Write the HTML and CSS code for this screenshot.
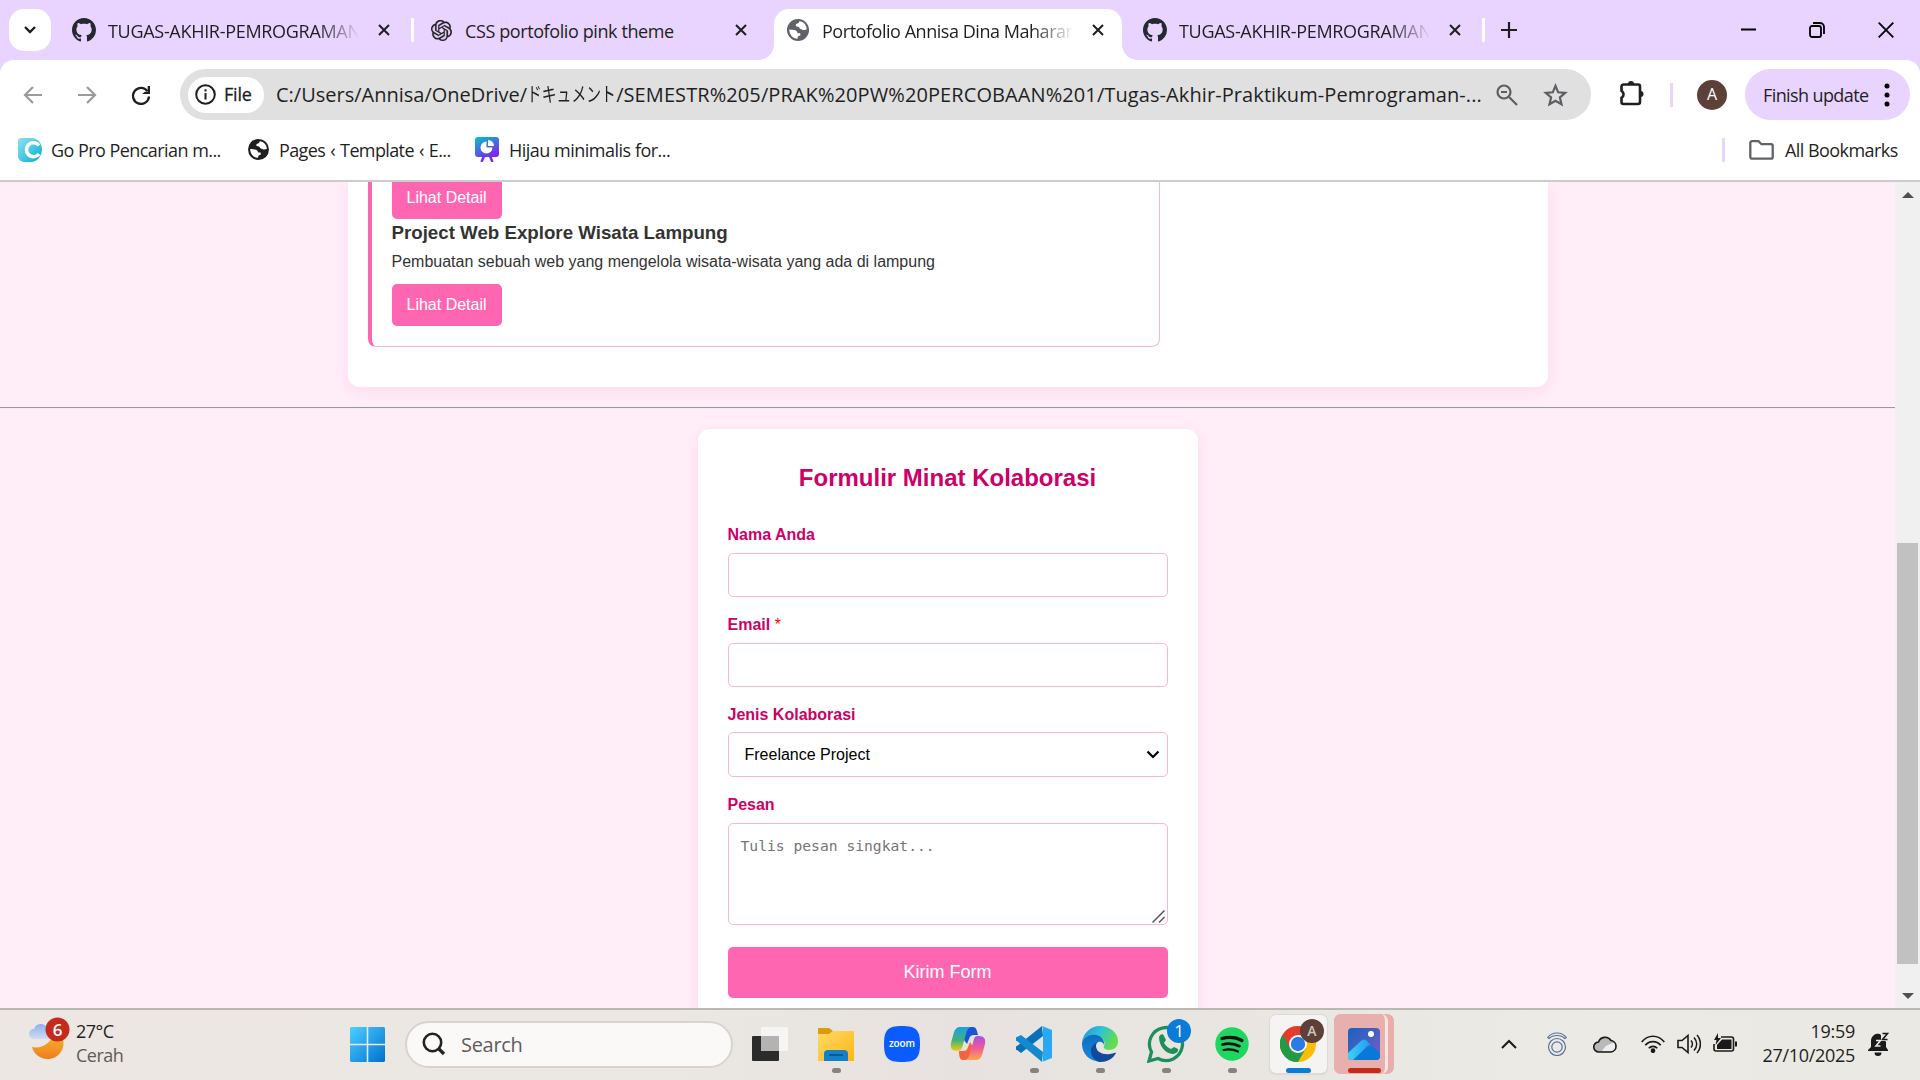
FILE: index.html
```html
<!DOCTYPE html>
<html lang="id">
<head>
<meta charset="utf-8">
<title>Portofolio Annisa Dina Maharani</title>
<link rel="stylesheet" href="styles.css">
</head>
<body>
<svg width="0" height="0" class="defs" aria-hidden="true">
  <defs>
    <symbol id="github" viewBox="0 0 16 16"><path fill="#24292f" d="M8 0C3.58 0 0 3.58 0 8c0 3.54 2.29 6.53 5.47 7.59.4.07.55-.17.55-.38 0-.19-.01-.82-.01-1.49-2.01.37-2.53-.49-2.69-.94-.09-.23-.48-.94-.82-1.13-.28-.15-.68-.52-.01-.53.63-.01 1.08.58 1.23.82.72 1.21 1.87.87 2.33.66.07-.52.28-.87.51-1.07-1.78-.2-3.64-.89-3.64-3.95 0-.87.31-1.59.82-2.15-.08-.2-.36-1.02.08-2.12 0 0 .67-.21 2.2.82.64-.18 1.32-.27 2-.27s1.36.09 2 .27c1.53-1.04 2.2-.82 2.2-.82.44 1.1.16 1.92.08 2.12.51.56.82 1.27.82 2.15 0 3.07-1.87 3.75-3.65 3.95.29.25.54.73.54 1.48 0 1.07-.01 1.93-.01 2.2 0 .21.15.46.55.38A8.01 8.01 0 0 0 16 8c0-4.42-3.58-8-8-8z"/></symbol>
    <symbol id="close" viewBox="0 0 12 12"><path d="M1 1l10 10M11 1L1 11" stroke="#1f1f1f" stroke-width="2" fill="none"/></symbol>
    <symbol id="globe" viewBox="0 0 24 24"><circle cx="12" cy="12" r="12" fill="currentColor"/><path fill="#fff" d="M2.500 11.500c0 0 3 .2 5 .5 2.500.3 4 1.500 4 3.500h3v2.500c-2 0-3 .8-3 3.500-5 0-9-4-9-10zM13.500 2.500c-.5 2-1.500 2.500-3 2.800-1 .2-1 1.500-.8 2.700 2.500 0 3.800 1 4.300 2.500 2 .3 2.500 1.500 4.500 1.500 1.500 0 2.300-.5 3-.5 0-5-3.500-8.500-8-9z"/></symbol>
  </defs>
</svg>

<header class="tabstrip">
  <button class="tab-search"><svg width="14" height="10" viewBox="0 0 14 10"><path d="M2 2l5 5 5-5" stroke="#1f1f1f" stroke-width="2.400" fill="none"/></svg></button>
  <div class="tab tab-1">
    <svg class="fav" width="24" height="24"><use href="#github"/></svg>
    <span class="title faded">TUGAS-AKHIR-PEMROGRAMAN</span>
    <svg class="x" width="12" height="12"><use href="#close"/></svg>
  </div>
  <i class="tab-div"></i>
  <div class="tab tab-2">
    <svg class="fav" width="21" height="21" viewBox="0 0 24 24"><path fill="#202020" stroke="#202020" stroke-width=".3" d="M22.2819 9.8211a5.9847 5.9847 0 0 0-.5157-4.9108 6.0462 6.0462 0 0 0-6.5098-2.9A6.0651 6.0651 0 0 0 4.9807 4.1818a5.9847 5.9847 0 0 0-3.9977 2.9 6.0462 6.0462 0 0 0 .7427 7.0966 5.98 5.98 0 0 0 .511 4.9107 6.051 6.051 0 0 0 6.5146 2.9001A5.9847 5.9847 0 0 0 13.2599 24a6.0557 6.0557 0 0 0 5.7718-4.2058 5.9894 5.9894 0 0 0 3.9977-2.9001 6.0557 6.0557 0 0 0-.7475-7.0729zm-9.022 12.6081a4.4755 4.4755 0 0 1-2.8764-1.0408l.1419-.0804 4.7783-2.7582a.7948.7948 0 0 0 .3927-.6813v-6.7369l2.02 1.1686a.071.071 0 0 1 .038.052v5.5826a4.504 4.504 0 0 1-4.4945 4.4944zm-9.6607-4.1254a4.4708 4.4708 0 0 1-.5346-3.0137l.142.0852 4.783 2.7582a.7712.7712 0 0 0 .7806 0l5.8428-3.3685v2.3324a.0804.0804 0 0 1-.0332.0615L9.74 19.9502a4.4992 4.4992 0 0 1-6.1408-1.6464zM2.3408 7.8956a4.485 4.485 0 0 1 2.3655-1.9728V11.6a.7664.7664 0 0 0 .3879.6765l5.8144 3.3543-2.0201 1.1685a.0757.0757 0 0 1-.071 0l-4.8303-2.7865A4.504 4.504 0 0 1 2.3408 7.872zm16.5963 3.8558L13.1038 8.364 15.1192 7.2a.0757.0757 0 0 1 .071 0l4.8303 2.7913a4.4944 4.4944 0 0 1-.6765 8.1042v-5.6772a.79.79 0 0 0-.407-.667zm2.0107-3.0231l-.142-.0852-4.7735-2.7818a.7759.7759 0 0 0-.7854 0L9.409 9.2297V6.8974a.0662.0662 0 0 1 .0284-.0615l4.8303-2.7866a4.4992 4.4992 0 0 1 6.6802 4.66zM8.3065 12.863l-2.02-1.1638a.0804.0804 0 0 1-.038-.0567V6.0742a4.4992 4.4992 0 0 1 7.3757-3.4537l-.142.0805L8.704 5.459a.7948.7948 0 0 0-.3927.6813zm1.0976-2.3654l2.602-1.4998 2.6069 1.4998v2.9994l-2.5974 1.4997-2.6067-1.4997Z"/></svg>
    <span class="title">CSS portofolio pink theme</span>
    <svg class="x" width="12" height="12"><use href="#close"/></svg>
  </div>
  <div class="tab tab-3 active">
    <svg class="fav grey" width="22" height="22"><use href="#globe"/></svg>
    <span class="title faded">Portofolio Annisa Dina Maharan</span>
    <svg class="x" width="12" height="12"><use href="#close"/></svg>
  </div>
  <div class="tab tab-4">
    <svg class="fav" width="24" height="24"><use href="#github"/></svg>
    <span class="title faded">TUGAS-AKHIR-PEMROGRAMAN</span>
    <svg class="x" width="12" height="12"><use href="#close"/></svg>
  </div>
  <i class="tab-div"></i>
  <svg class="plus" width="16" height="16" viewBox="0 0 16 16"><path d="M8 0v16M0 8h16" stroke="#1f1f1f" stroke-width="2.200"/></svg>
  <div class="win-controls">
    <svg width="16" height="16" viewBox="0 0 16 16"><path d="M1 7.500h15" stroke="#000" stroke-width="2"/></svg>
    <svg width="16" height="16" viewBox="0 0 16 16" fill="none" stroke="#000" stroke-width="1.800"><rect x="1" y="4" width="11" height="11" rx="2"/><path d="M4 1h7a4 4 0 0 1 4 4v7"/></svg>
    <svg width="16" height="16" viewBox="0 0 16 16"><path d="M.7.700l14.600 14.600M15.300.7L.7 15.300" stroke="#000" stroke-width="1.800"/></svg>
  </div>
</header>

<nav class="toolbar">
  <svg class="nav-ic" width="20" height="18" viewBox="0 0 20 18" fill="none" stroke="#9b9b9b" stroke-width="2.200"><path d="M19 9H2M10 1L2 9l8 8"/></svg>
  <svg class="nav-ic" width="20" height="18" viewBox="0 0 20 18" fill="none" stroke="#9b9b9b" stroke-width="2.200"><path d="M1 9h17M10 1l8 8-8 8"/></svg>
  <svg class="nav-ic" width="20" height="20" viewBox="0 0 20 20"><path d="M16.500 6.200A8 8 0 1 0 18 11.500" fill="none" stroke="#1f1f1f" stroke-width="2.300"/><path d="M19 1v8h-8l3-2.300h2.700V1z" fill="#1f1f1f"/></svg>
  <div class="omnibox">
    <span class="chip"><svg width="21" height="21" viewBox="0 0 21 21"><circle cx="10.500" cy="10.500" r="9.300" fill="none" stroke="#1f1f1f" stroke-width="2"/><path d="M10.500 9v6.500M10.500 5.300v2.200" stroke="#1f1f1f" stroke-width="2"/></svg><span class="file">File</span></span>
    <span class="url"><span>C:/Users/Annisa/OneDrive/</span><span class="jp">ドキュメント</span><span class="path">/SEMESTR%205/PRAK%20PW%20PERCOBAAN%201/Tugas-Akhir-Praktikum-Pemrograman-...</span></span>
    <svg class="mag" width="22" height="22" viewBox="0 0 22 22" fill="none" stroke="#5b5f63" stroke-width="2.200"><circle cx="8" cy="8" r="6.500"/><path d="M13 13l8 8M5 8h6"/></svg>
    <svg class="star" width="25" height="24" viewBox="0 0 25 24"><path d="M12.500 2.800l2.700 6.500 7 .6-5.300 4.600 1.600 6.800-6-3.600-6 3.600 1.600-6.800-5.300-4.600 7-.6z" fill="none" stroke="#5b5f63" stroke-width="2.200"/></svg>
  </div>
  <svg class="puzzle" width="26" height="26" viewBox="0 0 26 26"><path d="M4.500 4.500H19a2 2 0 0 1 2 2V22a2 2 0 0 1-2 2H4.500a2 2 0 0 1-2-2v-4.200a4 4 0 0 0 0-7V6.500a2 2 0 0 1 2-2z" fill="none" stroke="#1f1f1f" stroke-width="2.600"/><path d="M9 4a3 3 0 0 1 6 0zM21.500 11a3 3 0 0 1 0 6z" fill="#1f1f1f"/></svg>
  <i class="bar-div"></i>
  <span class="avatar">A</span>
  <button class="update"><span>Finish update</span><svg width="6" height="26" viewBox="0 0 6 26"><circle cx="3" cy="4" r="2.500"/><circle cx="3" cy="13" r="2.500"/><circle cx="3" cy="22" r="2.500"/></svg></button>
</nav>

<div class="bookmarks">
  <svg width="24" height="24" viewBox="0 0 24 24"><defs><linearGradient id="cg" x1="0" y1="0" x2="1" y2="1"><stop offset="0" stop-color="#8fe3ee"/><stop offset="1" stop-color="#00aed6"/></linearGradient></defs><path d="M3 0h10a11 11 0 0 1 11 12 12 12 0 0 1-11 12H6a6 6 0 0 1-6-6V3a3 3 0 0 1 3-3z" fill="url(#cg)"/><path d="M21 7.500a7 7 0 1 0 0 8.500" fill="none" stroke="#fff" stroke-width="3.600"/></svg>
  <span class="bm b1">Go Pro Pencarian m...</span>
  <svg class="dark" width="21" height="21"><use href="#globe"/></svg>
  <span class="bm b2">Pages ‹ Template ‹ E...</span>
  <svg width="24" height="25" viewBox="0 0 24 25"><defs><linearGradient id="hg" x1="0" y1="0" x2=".6" y2="1"><stop offset="0" stop-color="#00c4cc"/><stop offset=".5" stop-color="#3b78e0"/><stop offset="1" stop-color="#7d2ae8"/></linearGradient></defs><path d="M3 0h18a3 3 0 0 1 3 3v14a3 3 0 0 1-3 3H3a3 3 0 0 1-3-3V3a3 3 0 0 1 3-3z" fill="url(#hg)"/><path d="M9 19l-2.500 6M15 19l2.500 6" stroke="#7d2ae8" stroke-width="2.500"/><path d="M11.500 4.500a6 6 0 1 0 6 6h-6z" fill="#fff"/><path d="M13 3a6 6 0 0 1 6 6h-6z" fill="#fff"/></svg>
  <span class="bm b3">Hijau minimalis for...</span>
  <i class="bm-div"></i>
  <svg width="25" height="20" viewBox="0 0 25 20"><path d="M3 1.200h6.500l3 3H22a1.700 1.700 0 0 1 1.700 1.700V17a1.700 1.700 0 0 1-1.700 1.700H3A1.700 1.700 0 0 1 1.300 17V3A1.700 1.700 0 0 1 3 1.200z" fill="none" stroke="#5f6368" stroke-width="2.300"/></svg>
  <span class="bm b4">All Bookmarks</span>
</div>

<div class="viewport">
  <main class="page">
    <section class="card">
      <article class="projects">
        <a class="btn">Lihat Detail</a>
        <h3>Project Web Explore Wisata Lampung</h3>
        <p>Pembuatan sebuah web yang mengelola wisata-wisata yang ada di lampung</p>
        <a class="btn">Lihat Detail</a>
      </article>
    </section>
    <hr>
    <form class="form">
      <h2>Formulir Minat Kolaborasi</h2>
      <label>Nama Anda</label>
      <input type="text">
      <label>Email <span class="req">*</span></label>
      <input type="email">
      <label>Jenis Kolaborasi</label>
      <div class="select"><span>Freelance Project</span><svg width="14" height="9" viewBox="0 0 14 9"><path d="M1.500 1.500L7 7l5.500-5.500" fill="none" stroke="#000" stroke-width="2.200"/></svg></div>
      <label>Pesan</label>
      <div class="area"><span>Tulis pesan singkat...</span><svg width="13" height="13" viewBox="0 0 13 13"><path d="M.5 12.500l12-12M7 12.500L12.500 7" stroke="#555" stroke-width="1.500"/></svg></div>
      <div class="submit">Kirim Form</div>
    </form>
  </main>
  <aside class="scroll"><i class="up"></i><i class="thumb"></i><i class="down"></i></aside>
</div>

<footer class="taskbar">
  <div class="weather">
    <svg class="sky" width="42" height="42" viewBox="0 0 42 42"><defs><linearGradient id="mo" x1="0" y1="0" x2="0" y2="1"><stop offset="0" stop-color="#f6b42c"/><stop offset="1" stop-color="#f07c1e"/></linearGradient><linearGradient id="cl" x1="0" y1="0" x2="0" y2="1"><stop offset="0" stop-color="#8fb0ee"/><stop offset="1" stop-color="#cfdcf4"/></linearGradient></defs><path d="M3 24c9 2 18-3 21-12a14 14 0 0 1 10 4A15.500 15.500 0 0 1 3 24z" fill="url(#mo)"/><path d="M5 16a5 5 0 0 1 0-10 7 7 0 0 1 13-1 6 6 0 0 1 4 11z" fill="url(#cl)"/><circle cx="28.500" cy="6.500" r="12" fill="#c42b1c"/><text x="28.500" y="12.500" text-anchor="middle" class="badge-t">6</text></svg>
    <div class="lines"><span>27°C</span><span class="muted">Cerah</span></div>
  </div>
  <svg class="start" width="35" height="35" viewBox="0 0 35 35"><defs><linearGradient id="wn" x1="0" y1="0" x2="1" y2="1"><stop offset="0" stop-color="#4cd0ff"/><stop offset="1" stop-color="#0070d0"/></linearGradient></defs><path d="M1 0h15.700v16.700H0V1zM18.300 0H34l1 1v15.700H18.300zM0 18.300h16.700V35H1l-1-1zM18.300 18.300H35V34l-1 1H18.300z" fill="url(#wn)"/></svg>
  <div class="search"><svg width="24" height="24" viewBox="0 0 24 24" fill="none" stroke="#222" stroke-width="2.600"><circle cx="10.500" cy="10.500" r="8.700"/><path d="M17 17l5 5" stroke-width="3.200"/></svg><span>Search</span></div>
  <div class="apps">
    <div class="app"><svg width="36" height="36" viewBox="0 0 36 36"><rect y="10" width="27" height="25" rx="1" fill="#2b2b2b"/><path d="M10 1h25l1 1v22l-1 1H9V2z" fill="#f6f5f4"/><path d="M9 10h18v15H9z" fill="#b4b3b2"/></svg></div>
    <div class="app run"><svg width="36" height="36" viewBox="0 0 36 36"><defs><linearGradient id="fo" x1="0" y1="0" x2="1" y2="1"><stop offset="0" stop-color="#ffd968"/><stop offset="1" stop-color="#fcb714"/></linearGradient></defs><path d="M0 3a1 1 0 0 1 1-1h10l4 3-3 3H0z" fill="#dd9b0a"/><path d="M0 8h11l4-3h20a1 1 0 0 1 1 1v29H0z" fill="url(#fo)"/><path d="M6 35v-7a4 4 0 0 1 4-4h16a4 4 0 0 1 4 4v7z" fill="#1180cd"/><path d="M11 29h14" stroke="#0a5690" stroke-width="2"/></svg></div>
    <div class="app"><svg width="36" height="36" viewBox="0 0 36 36"><path d="M18 0C32 0 36 4 36 18S32 36 18 36 0 32 0 18 4 0 18 0z" fill="#0b5cff"/><text x="18" y="21" text-anchor="middle" class="zoom-t" textLength="26">zoom</text></svg></div>
    <div class="app"><svg width="36" height="36" viewBox="0 0 36 36"><defs><linearGradient id="c1" x1="0" y1="0" x2="0" y2="1"><stop offset="0" stop-color="#1f9de8"/><stop offset=".55" stop-color="#3fb37b"/><stop offset="1" stop-color="#f2cb13"/></linearGradient><linearGradient id="c2" x1="0" y1="0" x2="0" y2="1"><stop offset="0" stop-color="#a552e8"/><stop offset=".5" stop-color="#ee5a9a"/><stop offset="1" stop-color="#ffa64d"/></linearGradient></defs><path d="M9 1h14c3 0 4 3 5 8h-4c-3 0-4 1-5 4l-2 5-6-8z" fill="#1b53d6"/><path d="M27 34H13c-3 0-4-3-4-9h4c3 0 4-1 5-4l2-5 5 8z" fill="#f4643c"/><path d="M10 1h11c-3 1-4 3-5 7l-4 14c-1 2-3 3-5 3-5 0-7-3-6-8L4 6c1-3 3-5 6-5z" fill="url(#c1)"/><path d="M26 34H15c3-1 4-3 5-7l4-14c1-3 2-3 5-3 5 0 7 3 6 8l-3 11c-1 3-3 5-6 5z" fill="url(#c2)"/></svg></div>
    <div class="app run"><svg width="36" height="36" viewBox="0 0 36 36"><path d="M26 0l1 10L5 27l-4-3a2 2 0 0 1 0-4z" fill="#0a70b8"/><path d="M5 9l22 17-1 10L1 15a2 2 0 0 1 0-4z" fill="#1389d2"/><path d="M26 0l10 4v28l-10 4c1 0 1-1 1-2V2z" fill="#29a9f2"/></svg></div>
    <div class="app run"><svg width="36" height="36" viewBox="0 0 36 36"><defs><linearGradient id="e1" x1="0" y1="0" x2="1" y2=".4"><stop offset="0" stop-color="#2191d6"/><stop offset=".5" stop-color="#2fc0dc"/><stop offset="1" stop-color="#63dd4c"/></linearGradient><linearGradient id="e2" x1="0" y1="0" x2="0" y2="1"><stop offset="0" stop-color="#0f6dbc"/><stop offset="1" stop-color="#1789e0"/></linearGradient></defs><path d="M0 17A18 18 0 0 1 18 0c10 0 18 7 18 15 0 6-4 9-9 9-4 0-6-2-5-4 2-4-1-9-8-10C8 9 2 12 0 17z" fill="url(#e1)"/><path d="M0 17C2 11 8 8 14 9c6 1 9 6 8 10-1-4-8-5-8 2 0 6 5 10 12 10l-3 4C11 38 0 30 0 18z" fill="url(#e2)"/><path d="M14 20c0 6 7 9 14 8 2 0 5-2 6-1-3 6-9 9-16 9-5-1-10-6-9-13 1-3 3-5 5-6z" fill="#114a9c"/></svg></div>
    <div class="app run"><svg class="wa" width="44" height="44" viewBox="0 0 44 44"><path d="M2 42l2.500-9A16.500 16.500 0 1 1 11 39.500z" fill="none" stroke="#1d8f5b" stroke-width="3.300"/><path d="M12 18c1-3 4-4 5-1l2 4-2 3c2 3 4 5 7 6l3-2 4 2c1 3-3 5-6 5-7-1-13-8-13-17z" fill="#1d8f5b"/><circle cx="32" cy="12" r="12" fill="#0a7cd8"/><text x="32" y="18" text-anchor="middle" class="badge-t thin">1</text></svg></div>
    <div class="app run"><svg width="34" height="34" viewBox="0 0 34 34"><circle cx="17" cy="17" r="16.700" fill="#1ed760"/><g fill="none" stroke="#111" stroke-linecap="round"><path d="M7 11.500c7-2 14-1.500 20 2" stroke-width="3.200"/><path d="M7.500 17.500c6-1.700 12-1 17 1.700" stroke-width="2.700"/><path d="M8.500 23c5-1.300 10-.8 14.500 1.500" stroke-width="2.200"/></g></svg></div>
    <div class="app tile"><svg class="chrome" width="46" height="44" viewBox="0 0 46 44"><circle cx="18" cy="26" r="18" fill="#fbbc04"/><path d="M2.400 17A18 18 0 0 0 18 44l8-14z" fill="#239a48"/><path d="M2.400 17a18 18 0 0 1 31.200 0H18l-8 13z" fill="#e33b2e"/><path d="M2.400 17L10 30.500A18 18 0 0 0 18 44 18 18 0 0 1 2.400 17z" fill="#239a48"/><circle cx="18" cy="26" r="9" fill="#fff"/><circle cx="18" cy="26" r="7.200" fill="#2c7be5"/><circle cx="32" cy="13" r="12" fill="#5d4037"/><text x="32" y="18" text-anchor="middle" class="av-t">A</text></svg></div>
    <div class="app photos"><div class="front"><svg width="32" height="32" viewBox="0 0 32 32"><defs><linearGradient id="ph1" x1="0" y1="0" x2="1" y2="1"><stop offset="0" stop-color="#1663c4"/><stop offset="1" stop-color="#7a5cc0"/></linearGradient><linearGradient id="ph2" x1="0" y1="0" x2="1" y2="0"><stop offset="0" stop-color="#3fd0fa"/><stop offset="1" stop-color="#1d9cee"/></linearGradient><clipPath id="pc"><rect width="32" height="32" rx="4"/></clipPath></defs><g clip-path="url(#pc)"><rect width="32" height="32" fill="url(#ph1)"/><path d="M5 32l14-13c2-2 4-2 6 0l8 7v6z" fill="#0a78d8"/><path d="M0 25l13-12c2-2 4-2 6 0l4 4.500c-2-.5-3 0-4 1L5 32H0z" fill="url(#ph2)"/><circle cx="23" cy="6" r="3" fill="#fff"/></g></svg></div></div>
  </div>
  <div class="tray">
    <svg class="t1" width="16" height="10" viewBox="0 0 16 10"><path d="M1 9l7-7 7 7" fill="none" stroke="#1a1a1a" stroke-width="2"/></svg>
    <svg class="t2" width="20" height="24" viewBox="0 0 20 24" fill="none" stroke="#5a6f9b" stroke-width="1.200"><circle cx="10" cy="15" r="8.500"/><circle cx="10" cy="15" r="5.200"/><path d="M.7 5.500C5-.5 15-.5 19.300 5.500l-1.500 1C14 2.500 6 2.500 2.200 6.500z"/></svg>
    <svg class="t3" width="24" height="18" viewBox="0 0 24 18"><path d="M6 17a5 5 0 0 1-.5-10A7 7 0 0 1 18 5.500 5.800 5.800 0 0 1 18 17z" fill="#b9b9b9"/><path d="M9 16.300c2-4 5-7 12-8.500 3 4 1 8.500-3 8.500z" fill="#eee"/><path d="M6 17a5 5 0 0 1-.5-10A7 7 0 0 1 18 5.500 5.800 5.800 0 0 1 18 17z" fill="none" stroke="#1a1a1a" stroke-width="1.600"/></svg>
    <svg class="t4" width="24" height="18" viewBox="0 0 24 18" fill="none" stroke="#1a1a1a" stroke-width="1.700"><path d="M.7 7C7-.7 17-.7 23.300 7M4.300 10.300c4-5 11.400-5 15.400 0M7.800 13.300c2.200-2.700 6.200-2.700 8.400 0"/><circle cx="12" cy="15.700" r="1.500" fill="#1a1a1a"/></svg>
    <svg class="t5" width="24" height="20" viewBox="0 0 24 20" fill="none" stroke="#1a1a1a" stroke-width="1.600"><path d="M1 6.500h4l6-5v17l-6-5H1zM14 6.500c1.800 2 1.800 5 0 7M17 3.500c3.500 4 3.500 9 0 13M20 1c4.500 5 4.500 13 0 18"/></svg>
    <svg class="t6" width="24" height="20" viewBox="0 0 24 20"><path d="M8 4h10.500a2 2 0 0 1 2 2v10a2 2 0 0 1-2 2H3a2 2 0 0 1-2-2v-5" fill="none" stroke="#1a1a1a" stroke-width="1.600"/><path d="M9 6.500h9.500v9.500H4v-4zM22 8.500h1.500a.5.500 0 0 1 .5.500v4a.5.500 0 0 1-.5.500H22zM5 0L1 7h2.500l-1 5L8 5H5z" fill="#1a1a1a"/></svg>
    <div class="lines clock"><span>19:59</span><span>27/10/2025</span></div>
    <svg class="bell" width="22" height="24" viewBox="0 0 22 24"><path d="M3 9a7 7 0 0 1 9-7l6 8v5l2 3v1H0v-1l3-3zM6.500 20.500h7a3.500 3.500 0 0 1-7 0z" fill="#1a1a1a"/><path d="M13 0h8v9h-8z" fill="#ebe9e3"/><path d="M14.500 1.500h5l-5 6h5" fill="none" stroke="#1a1a1a" stroke-width="1.600"/><path d="M8 8.500h4.500L8 14h4.500" fill="none" stroke="#ebe9e3" stroke-width="1.600"/></svg>
  </div>
</footer>
</body>
</html>
```
FILE: styles.css
```css
* { box-sizing: border-box; }
body { margin: 0; width: 1920px; height: 1080px; overflow: hidden; display: flex; flex-direction: column; background: #e8d4fe; color: #1f1f1f; font-family: "Open Sans", "Noto Sans CJK JP", sans-serif; font-size: 18px; }
.defs { position: absolute; }
svg { display: block; flex: none; }
button { border: 0; padding: 0; font: inherit; color: inherit; }

/* tab strip */
.tabstrip { height: 60px; flex: none; display: flex; align-items: center; }
.tab-search { width: 42px; height: 42px; margin-left: 9px; border-radius: 15px; background: #fff; display: flex; align-items: center; justify-content: center; }
.tab { display: flex; align-items: center; height: 60px; flex: none; }
.title { white-space: nowrap; letter-spacing: -0.3px; line-height: 30px; margin-top: 2px; }
.faded { width: 250px; mask-image: linear-gradient(90deg, #000 210px, transparent 252px); }
.tab .x { margin-left: 19px; }
.tab-1 { padding-left: 21px; width: 360px; }
.tab-1 .title, .tab-4 .title { margin-left: 12px; margin-right: 1px; }
.tab-div { width: 3px; height: 24px; background: #fff; border-radius: 1px; flex: none; }
.tab-2 { padding-left: 17px; width: 360px; }
.tab-2 .title { margin-left: 13px; margin-right: 1px; width: 250px; letter-spacing: -0.400px; }
.tab-3 { width: 348px; height: 51px; margin-top: 9px; padding: 0 0 9px 13px; background: #fff; border-radius: 15px 15px 0 0; position: relative; }
.tab-3 .title { margin-left: 13px; letter-spacing: -0.460px; }
.tab-3::before, .tab-3::after { content: ""; position: absolute; bottom: 0; width: 15px; height: 15px; }
.tab-3::before { left: -15px; background: radial-gradient(circle at 0 0, transparent 14.500px, #fff 15px); }
.tab-3::after { right: -15px; background: radial-gradient(circle at 100% 0, transparent 14.500px, #fff 15px); }
.tab-3 .x { margin-left: 20px; }
.tab-4 { padding-left: 21px; width: 360px; }
.grey { color: #5f6368; }
.dark { color: #1f1f1f; }
.plus { margin-left: 16px; }
.win-controls { margin-left: auto; margin-right: 26px; display: flex; gap: 53px; }

/* toolbar */
.toolbar { height: 67px; flex: none; display: flex; align-items: center; padding: 2px 10px 0 23px; background: #fff; border-radius: 14px 14px 0 0; }
.nav-ic { margin-right: 34px; }
.nav-ic + .omnibox { margin-left: -5px; }
.omnibox { width: 1411px; height: 51px; border-radius: 26px; background: #e0e0e0; display: flex; align-items: center; padding-left: 8px; }
.chip { width: 76px; height: 36px; border-radius: 18px; background: #fff; display: flex; align-items: center; padding-left: 7px; }
.file { margin-left: 8px; letter-spacing: -0.200px; -webkit-text-stroke: .3px; margin-top: -1px; }
.url { width: 1205px; margin-left: 12px; margin-right: 1px; font-size: 20px; white-space: nowrap; line-height: 40px; display: flex; }
.jp { width: 89px; transform: scaleX(.740); transform-origin: 0 50%; }
.path { letter-spacing: 0.090px; }
.mag { margin-left: 14px; }
.star { margin-left: 25px; }
.puzzle { margin: 0 0 4px 28px; }
.bar-div { width: 3px; height: 24px; background: #e8d4fe; margin-left: 25px; }
.avatar { width: 30px; height: 30px; border-radius: 50%; background: #5d4037; color: #fff; font-size: 16px; line-height: 29px; text-align: center; margin-left: 24px; }
.update { width: 165px; height: 51px; border-radius: 26px; background: #e8d4fe; margin-left: auto; display: flex; align-items: center; padding-left: 18px; white-space: nowrap; }
.update span { width: 106px; letter-spacing: -0.600px; text-align: left; }
.update svg { margin-left: 15px; }

/* bookmarks */
.bookmarks { height: 55px; flex: none; background: #fff; border-bottom: 2px solid #ccc; display: flex; align-items: center; padding: 0 0 8px 18px; white-space: nowrap; }
.bm { margin-left: 9px; letter-spacing: -0.550px; }
.b1 { width: 197px; }
.b2 { width: 196px; margin-left: 10px; letter-spacing: -0.620px; word-spacing: 1px; }
.b3 { width: 162px; margin-left: 10px; letter-spacing: -0.500px; }
.bm-div { width: 3px; height: 24px; background: #e8d4fe; margin-left: auto; margin-right: 24px; }
.b4 { width: 113px; margin-right: 22px; margin-left: 11px; }

/* page */
.viewport { height: 826px; flex: none; display: flex; overflow: hidden; }
.page { width: 1895px; height: 826px; background: #ffeef8; overflow: hidden; color: #333; font: 16px "Liberation Sans", Arial, sans-serif; }
.card { width: 1200px; height: 205px; margin: 0 auto; background: #fff; border-radius: 0 0 12px 12px; padding: 0 20px; box-shadow: 0 4px 15px rgba(255, 102, 178, .15); }
.projects { display: flow-root; width: 792px; height: 165px; border: 1px solid #ffb3d1; border-top: 0; border-left: 4px solid #ff66b2; border-radius: 0 0 8px 8px; padding-left: 20px; }
.btn { display: block; width: 110px; height: 42px; border-radius: 5px; background: #ff66b2; color: #fff; padding-left: 15px; line-height: 41px; }
.btn:first-child { margin-top: -5px; }
h3 { margin: 2px 0 0; font-size: 18.720px; line-height: 24px; }
.projects p { margin: 6px 0 11px; line-height: 22px; }
hr { margin: 20px 0 0; border: 0; border-top: 1px solid #999; height: 2px; background: #eee; }
.form { width: 500px; height: 640px; margin: 20px auto 0; padding: 30px; background: #fff; border-radius: 12px; box-shadow: 0 4px 15px rgba(255, 102, 178, .15); }
h2 { margin: 0; height: 64px; line-height: 38px; font-size: 24px; color: #cc0066; text-align: center; }
label { display: block; height: 30px; line-height: 24px; font-weight: 700; color: #cc0066; }
.req { color: red; font-weight: 400; }
input, .select, .area { display: block; width: 440px; height: 44px; margin-bottom: 16px; border: 1px solid #ffb3d1; border-radius: 5px; background: #fff; padding: 12px; }
.select { height: 45px; margin-top: -1px; color: #000; display: flex; align-items: center; justify-content: space-between; padding: 0 7px 0 16px; }
.area { height: 102px; margin-bottom: 22px; padding-top: 11px; position: relative; font: 14.670px "DejaVu Sans Mono", monospace; color: #757575; line-height: 22px; }
.area svg { position: absolute; right: 2px; bottom: 1px; }
.submit { height: 51px; border-radius: 5px; background: #ff66b2; color: #fff; font-size: 18px; line-height: 50px; text-align: center; }
.scroll { width: 25px; background: #f0f0f0; display: flex; flex-direction: column; align-items: center; }
.up { border: 6px solid transparent; border-top: 0; border-bottom: 6px solid #505050; margin-top: 10px; }
.thumb { width: 21px; height: 421px; background: #c1c1c1; margin-top: 345px; }
.down { border: 6px solid transparent; border-bottom: 0; border-top: 6px solid #505050; margin-top: 29px; }

/* taskbar */
.taskbar { height: 72px; flex: none; border-top: 2px solid #bab8b2; background: linear-gradient(90deg, #ece7e2, #ebe7e2 35%, #e7e2df 50%, #ebeae4 80%, #ebe9e3); display: flex; align-items: center; padding-bottom: 2px; }
.weather { display: flex; align-items: center; margin-left: 29px; width: 321px; }
.sky { overflow: visible; }
.badge-t { font: 600 17px "Open Sans", sans-serif; fill: #fff; }
.thin { font-weight: 400; }
.av-t { font: 600 14px "Open Sans", sans-serif; fill: #cfc4c0; }
.zoom-t { font: 600 10px "Open Sans", sans-serif; fill: #fff; }
.lines { display: flex; flex-direction: column; line-height: 24px; margin-top: -2px; letter-spacing: -0.500px; }
.weather .lines { margin-left: 5px; }
.muted { color: #5c5c5c; }
.search { width: 328px; height: 47px; border-radius: 24px; margin-left: 20px; background: #fbf9f8; border: 2px solid #d8d3cf; display: flex; align-items: center; padding-left: 15px; font-size: 20px; color: #5c5c5c; letter-spacing: -0.300px; }
.search span { margin-left: 15px; }
.apps { display: flex; align-items: center; margin-left: 4px; }
.app { width: 66px; height: 68px; display: flex; align-items: center; justify-content: center; position: relative; }
.run::after, .tile::after, .front::after { content: ""; position: absolute; bottom: 5px; left: 29px; width: 9px; height: 5px; border-radius: 3px; background: #858280; }
.wa { margin: 0 0 6px 6px; }
.chrome { margin: 0 0 8px 10px; }
.tile { width: 57px; height: 58px; margin: 0 4.500px; border-radius: 6px; background: #f6f4f3; box-shadow: 0 0 0 1px #dedad7, 0 1px 2px #bbb; }
.tile::after { left: 16px; width: 25px; bottom: 0; background: #0a7cd8; }
.photos { width: 60px; height: 60px; margin: 0 3px; border-radius: 7px; background: #e9aeaa; justify-content: flex-start; }
.front { width: 54px; height: 60px; border-radius: 7px; border-right: 3px solid #f3e6e3; background: #e7b0ac; display: flex; align-items: center; padding-left: 14px; }
.front::after { left: 14px; width: 33px; bottom: 1px; background: #c42b1c; }
.tray { display: flex; align-items: center; margin-left: auto; }
.clock { text-align: right; width: 100px; align-items: flex-end; letter-spacing: -0.300px; }
.t1 { margin-right: 30px; } .t2 { margin-right: 26px; } .t3 { margin-right: 24px; } .t4, .t5 { margin-right: 12px; } .t6 { margin-right: 18px; margin-bottom: 3px; }
.bell { margin: 0 30px 0 13px; }
```
